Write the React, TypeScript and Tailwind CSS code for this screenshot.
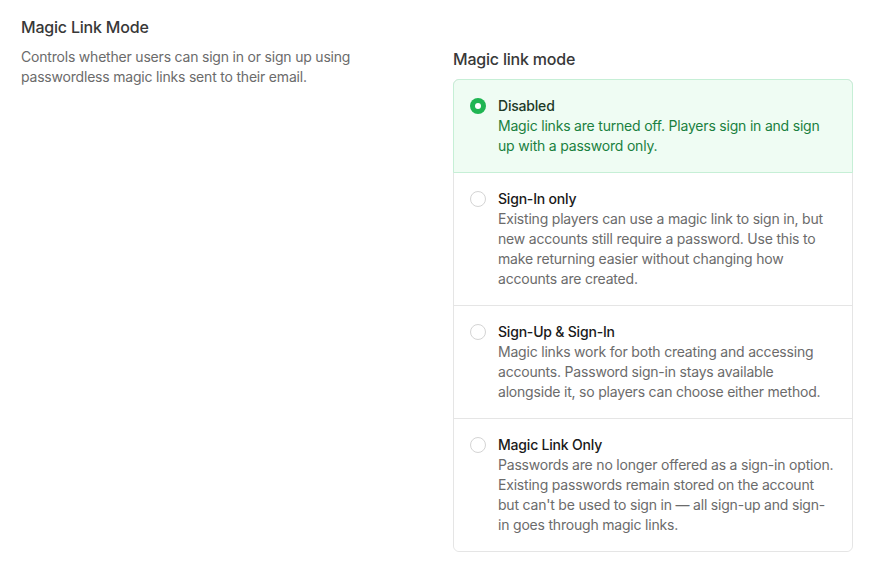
import { useState } from "react";

// description lines are kept as shown in the design so wrapping stays stable
const options = [
  {
    id: "disabled",
    title: "Disabled",
    lines: [
      "Magic links are turned off. Players sign in and sign",
      "up with a password only.",
    ],
  },
  {
    id: "signin",
    title: "Sign-In only",
    lines: [
      "Existing players can use a magic link to sign in, but",
      "new accounts still require a password. Use this to",
      "make returning easier without changing how",
      "accounts are created.",
    ],
  },
  {
    id: "both",
    title: "Sign-Up & Sign-In",
    lines: [
      "Magic links work for both creating and accessing",
      "accounts. Password sign-in stays available",
      "alongside it, so players can choose either method.",
    ],
  },
  {
    id: "only",
    title: "Magic Link Only",
    lines: [
      "Passwords are no longer offered as a sign-in option.",
      "Existing passwords remain stored on the account",
      "but can't be used to sign in — all sign-up and sign-",
      "in goes through magic links.",
    ],
  },
];

function Radio({ checked }: { checked: boolean }) {
  return checked ? (
    <span className="mt-[2px] flex h-4 w-4 shrink-0 items-center justify-center rounded-full bg-[#1fb552]">
      <span className="h-[6px] w-[6px] rounded-full bg-white" />
    </span>
  ) : (
    <span className="mt-[2px] h-4 w-4 shrink-0 rounded-full border border-[#d4d4d4] bg-white" />
  );
}

export default function App() {
  const [mode, setMode] = useState("disabled");

  return (
    <div className="min-h-screen bg-white font-['Inter',sans-serif] text-sm tracking-[-0.2px]">
      <div className="flex pl-[21px] pr-[22px] pt-[17px]">
        {/* Left: section description */}
        <div className="w-[432px] shrink-0">
          <h1 className="text-[16px] font-medium leading-5 text-[#383838]">
            Magic Link Mode
          </h1>
          <p className="mt-[10px] w-[340px] text-[14px] leading-5 text-[#6b6b6b]">
            Controls whether users can sign in or sign up using passwordless
            magic links sent to their email.
          </p>
        </div>

        {/* Right: options */}
        <div className="flex-1 pt-[32px]">
          <p className="text-[16px] font-medium leading-5 text-[#383838]">
            Magic link mode
          </p>
          <div className="mt-[10px] divide-y divide-[#e5e5e5] rounded-md border border-[#e5e5e5]">
            {options.map((opt, i) => {
              const checked = mode === opt.id;
              return (
                <button
                  key={opt.id}
                  onClick={() => setMode(opt.id)}
                  className={`relative flex w-full gap-3 py-4 pl-4 pr-2 text-left ${
                    checked ? "bg-[#effcf3]" : "bg-white"
                  } ${i === 0 ? "rounded-t-md" : ""} ${
                    i === options.length - 1 ? "rounded-b-md" : ""
                  }`}
                >
                  {checked && (
                    <span
                      className={`pointer-events-none absolute inset-[-1px] border border-[#c6efd6] ${
                        i === 0 ? "rounded-t-md" : ""
                      }`}
                    />
                  )}
                  <Radio checked={checked} />
                  <div className="min-w-0">
                    <p
                      className={`text-[14px] font-medium leading-5 ${
                        checked ? "text-[#1d3a28]" : "text-[#1a1a1a]"
                      }`}
                    >
                      {opt.title}
                    </p>
                    <p
                      className={`whitespace-nowrap text-[14px] leading-5 ${
                        checked ? "text-[#1a8040]" : "text-[#6b6b6b]"
                      }`}
                    >
                      {opt.lines.map((line, j) => (
                        <span key={j} className="block">
                          {line}
                        </span>
                      ))}
                    </p>
                  </div>
                </button>
              );
            })}
          </div>
        </div>
      </div>
    </div>
  );
}
